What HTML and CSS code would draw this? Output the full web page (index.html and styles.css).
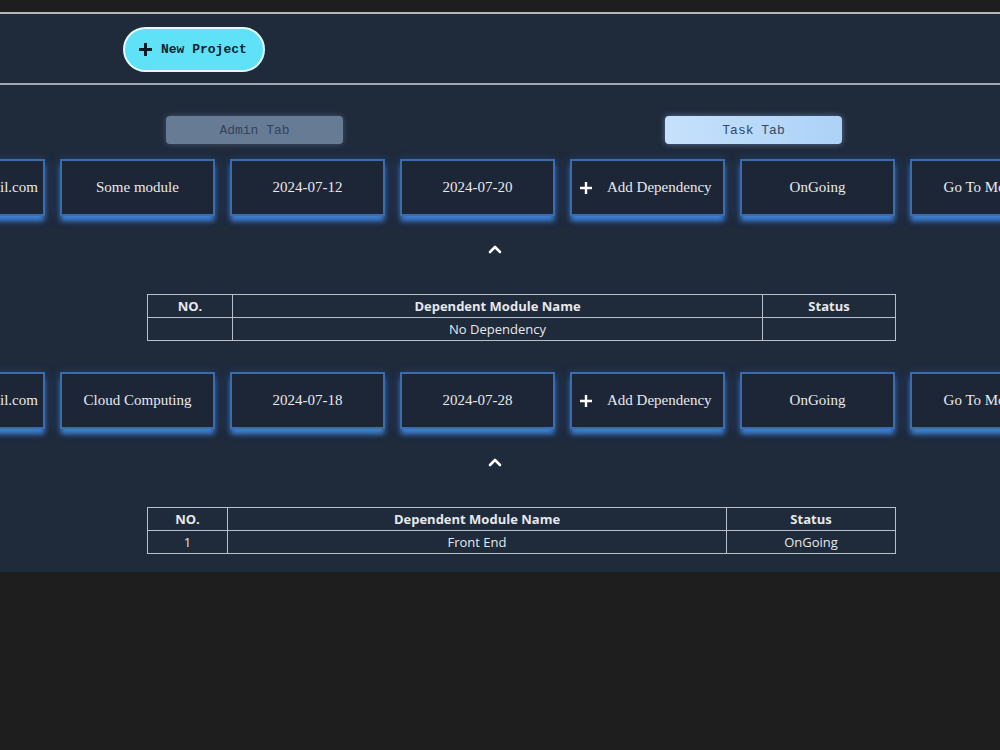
FILE: index.html
```html
<!DOCTYPE html>
<html lang="en">
<head>
    <meta charset="UTF-8">
    <meta name="viewport" content="width=device-width, initial-scale=1.0">
    <link rel="stylesheet" href="styles.css">
    <title>Project Tasks</title>
</head>
<body>
    <div class="topbar"></div>
    <div class="header">
        <button class="new-project">
            <svg width="15" height="15" viewBox="0 0 15 15"><path d="M7.5 1v13M1 7.5h13" stroke="#0b1b26" stroke-width="3"/></svg>
            New Project
        </button>
    </div>
    <div class="main">
        <div class="tabs">
            <button class="tab admin-tab">Admin Tab</button>
            <button class="tab task-tab">Task Tab</button>
        </div>

        <div class="group">
            <div class="cards">
                <div class="card">johndoe12@gmail.com</div>
                <div class="card">Some module</div>
                <div class="card">2024-07-12</div>
                <div class="card">2024-07-20</div>
                <div class="card add">
                    <svg width="12" height="12" viewBox="0 0 12 12"><path d="M6 0v12M0 6h12" stroke="#fff" stroke-width="2.4"/></svg>
                    Add Dependency
                </div>
                <div class="card">OnGoing</div>
                <div class="card">Go To Module</div>
            </div>
            <div class="chevron">
                <svg width="14" height="10" viewBox="0 0 14 10"><polyline points="2,8 7,3 12,8" fill="none" stroke="#fff" stroke-width="2.6" stroke-linecap="round" stroke-linejoin="round"/></svg>
            </div>
            <table class="deps deps-empty">
                <tr>
                    <th class="col-no">NO.</th>
                    <th class="col-name">Dependent Module Name</th>
                    <th class="col-status">Status</th>
                </tr>
                <tr>
                    <td></td>
                    <td>No Dependency</td>
                    <td></td>
                </tr>
            </table>
        </div>

        <div class="group">
            <div class="cards">
                <div class="card">johndoe12@gmail.com</div>
                <div class="card">Cloud Computing</div>
                <div class="card">2024-07-18</div>
                <div class="card">2024-07-28</div>
                <div class="card add">
                    <svg width="12" height="12" viewBox="0 0 12 12"><path d="M6 0v12M0 6h12" stroke="#fff" stroke-width="2.4"/></svg>
                    Add Dependency
                </div>
                <div class="card">OnGoing</div>
                <div class="card">Go To Module</div>
            </div>
            <div class="chevron">
                <svg width="14" height="10" viewBox="0 0 14 10"><polyline points="2,8 7,3 12,8" fill="none" stroke="#fff" stroke-width="2.6" stroke-linecap="round" stroke-linejoin="round"/></svg>
            </div>
            <table class="deps deps-list">
                <tr>
                    <th class="col-no">NO.</th>
                    <th class="col-name">Dependent Module Name</th>
                    <th class="col-status">Status</th>
                </tr>
                <tr>
                    <td>1</td>
                    <td>Front End</td>
                    <td>OnGoing</td>
                </tr>
            </table>
        </div>
    </div>
</body>
</html>
```

FILE: styles.css
```css
body {
    margin: 0;
    padding: 0;
    background-color: #1e1e1e;
    overflow: hidden;
}

.topbar {
    height: 12px;
}

.header {
    height: 69px;
    background-color: #1f2a3b;
    border-top: 2px solid #b3b6bb;
    border-bottom: 2px solid #a3a7ad;
    display: flex;
    align-items: center;
    padding-left: 123px;
}

.new-project {
    display: flex;
    align-items: center;
    gap: 8px;
    height: 45px;
    width: 142px;
    padding: 0 0 0 13px;
    background-color: #5fe2f7;
    border: 2px solid #e4f9fc;
    border-radius: 23px;
    font-family: 'Liberation Mono', monospace;
    font-weight: bold;
    font-size: 13px;
    color: #10222e;
    margin-top: 1px;
}

.main {
    background-color: #1f2a3b;
    padding-top: 31px;
    padding-bottom: 18px;
    overflow: hidden;
}

.tabs {
    display: flex;
    gap: 322px;
    padding-left: 166px;
    margin-bottom: 15px;
}

.tab {
    width: 177px;
    height: 28px;
    border: none;
    border-radius: 4px;
    font-family: 'Liberation Mono', monospace;
    font-size: 13px;
}

.admin-tab {
    background-color: #687b95;
    color: #33435a;
    box-shadow: 0 0 6px rgba(120, 140, 170, 0.45);
}

.task-tab {
    background: linear-gradient(90deg, #c6e1fb, #acd2f7);
    color: #34496a;
    box-shadow: 0 0 6px rgba(150, 190, 235, 0.5);
}

.group {
    margin-bottom: 31px;
}

.group:last-child {
    margin-bottom: 0;
}

.cards {
    display: flex;
    gap: 15px;
    margin-left: -110px;
}

.card {
    flex: 0 0 auto;
    box-sizing: border-box;
    width: 155px;
    height: 57px;
    display: flex;
    align-items: center;
    justify-content: center;
    gap: 15px;
    background-color: #1d2637;
    border: 2px solid #3b6dad;
    box-shadow: 0 6px 5px -1px #3d7fd3, 0 2px 10px rgba(50, 110, 200, 0.45);
    font-family: 'Liberation Serif', serif;
    font-size: 15px;
    color: #e9e9ea;
    white-space: nowrap;
    overflow: hidden;
}

.card.add {
    justify-content: flex-start;
    padding-left: 8px;
}

.chevron {
    padding-left: 488px;
    margin-top: 28px;
    height: 11px;
}

.chevron svg {
    display: block;
}

.deps {
    margin: 39px 0 0 147px;
    width: 749px;
    border-collapse: collapse;
    font-family: 'Open Sans', sans-serif;
    font-size: 13px;
    color: #e6e8ec;
}

.deps th,
.deps td {
    border: 1px solid #b9bfc8;
    text-align: center;
    padding: 0;
    height: 22px;
}

.deps th {
    font-weight: bold;
}

.deps-empty .col-no { width: 84px; }
.deps-empty .col-status { width: 132px; }
.deps-list .col-no { width: 79px; }
.deps-list .col-status { width: 168px; }
```
